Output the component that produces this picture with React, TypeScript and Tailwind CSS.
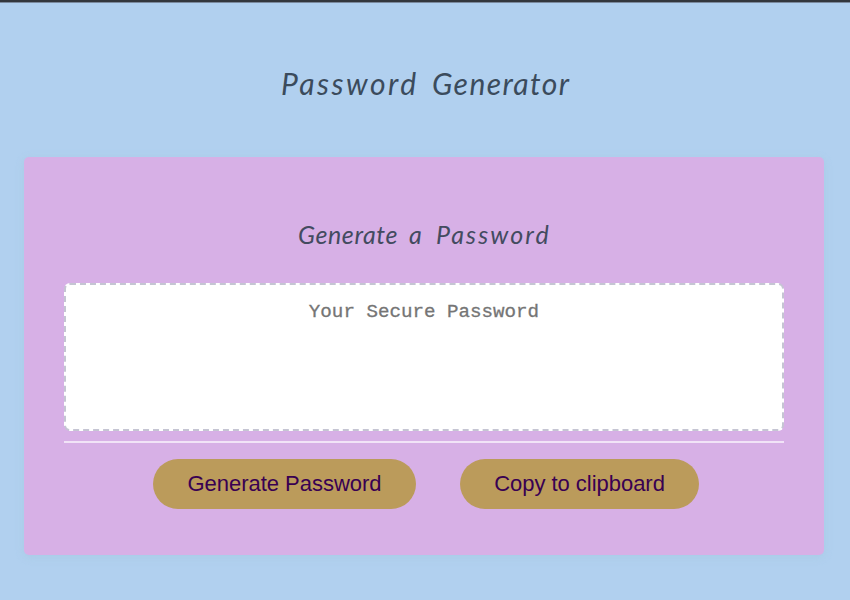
import React from "react";

const buttonClass =
  "h-[50px] shrink-0 rounded-full bg-[#bb9b5b] text-center font-['Liberation_Sans',Arial,sans-serif] text-[22px] leading-[50px] tracking-[-0.03px] text-[#380052] whitespace-nowrap";

export default function App() {
  return (
    <div className="h-[600px] w-[850px] overflow-hidden border-t-2 border-[#33373d] bg-[#b1d0ef] shadow-[inset_0_1px_0_#7b8a9e]">
      <header className="h-[155px] pl-[281px] pt-[59px]">
        <h1 className="h-[44px] whitespace-nowrap font-['Lato',cursive] text-[30px] font-normal italic leading-[44px] text-[#3b4b5c]">
          <span className="inline-block w-[151px] tracking-[2.5px]">Password </span>
          <span className="tracking-[1.4px]">Generator</span>
        </h1>
      </header>
      <main className="ml-6 h-[398px] w-[800px] rounded-[5px] bg-[#d7b0e6] px-10 pt-[57px] shadow-[0_2px_8px_rgba(160,200,220,0.45)]">
        <h2 className="h-[40px] whitespace-nowrap pl-[234px] font-['Lato',cursive] text-[25px] font-normal italic leading-[40px] text-[#434b60]">
          <span className="inline-block w-[111px] tracking-[0.6px]">Generate </span>
          <span className="inline-block w-[27px]">a </span>
          <span className="tracking-[2.1px]">Password</span>
        </h2>
        <textarea
          readOnly
          aria-label="Generated password"
          placeholder="Your Secure Password"
          className="mt-[29px] block h-[148px] w-[720px] resize-none rounded-[6px] border-2 border-dashed border-[#c5c5d3] bg-white pt-[16px] text-center font-['Liberation_Mono','Courier_New',monospace] text-[19.2px] leading-[22px] text-[#757575] outline-none placeholder:text-[#757575] [-webkit-text-stroke:0.3px_#757575]"
        />
        <hr className="mt-[10px] h-0.5 border-0 bg-[#f1e3f7]" />
        <div className="mt-4 ml-[89px] flex gap-11">
          <button className={`w-[263px] ${buttonClass}`}>Generate Password</button>
          <button className={`w-[239px] ${buttonClass}`}>Copy to clipboard</button>
        </div>
      </main>
    </div>
  );
}
